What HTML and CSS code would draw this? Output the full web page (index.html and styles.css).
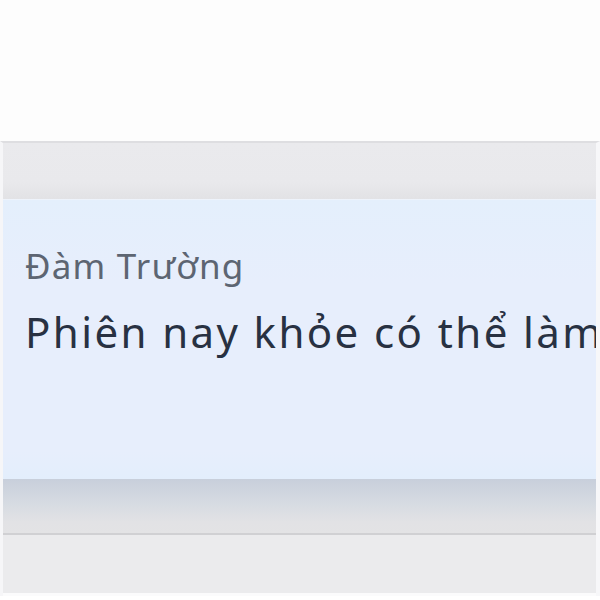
FILE: index.html
```html
<!DOCTYPE html>
<html lang="vi">
<head>
  <meta charset="UTF-8" />
  <meta name="viewport" content="width=device-width, initial-scale=1.0" />
  <title>Tin nhắn</title>
  <link rel="stylesheet" href="styles.css">
</head>
<body>

  <div class="top-space"></div>

  <div class="chat-frame">
    <div class="chat-head"></div>

    <div class="message">
      <span class="sender">Đàm Trường</span>
      <p class="text">Phiên nay khỏe có thể làm được gì không anh</p>
    </div>

    <div class="message-shadow"></div>
    <div class="chat-foot"></div>
  </div>

</body>
</html>
```

FILE: styles.css
```css
body {
  margin: 0;
  background: #fff;
  font-family: 'Noto Sans', 'Open Sans', sans-serif;
  overflow: hidden;
  height: 600px;
}

.top-space {
  height: 141px;
  background: #fdfdfd;
}

.chat-frame {
  display: flex;
  flex-direction: column;
  border-top: 2px solid #dedee1;
  border-left: 3px solid #f6f6f8;
  border-right: 4px solid #f7f7f9;
  height: 453px;
  background: #ebebed;
}

.chat-head {
  height: 56px;
  background: linear-gradient(#eaeaed, #e9e9ec 70%, #e2e2e5);
}

.message {
  height: 280px;
  background: linear-gradient(#e4effc, #e7eefc 30%, #e7eefc 90%, #e3eefc);
  border-top: 1px solid #eef3fb;
  padding: 46px 0 0 22px;
  box-sizing: border-box;
  white-space: nowrap;
  overflow: hidden;
}

.sender {
  display: block;
  font-size: 35px;
  letter-spacing: 1.2px;
  color: #5d6572;
  line-height: 40px;
}

.text {
  margin: 22px 0 0;
  font-size: 42px;
  letter-spacing: 2.4px;
  color: #283142;
  line-height: 48px;
}

.message-shadow {
  height: 54px;
  background: linear-gradient(#c8cfdb, #d6dbe2 45%, #e2e2e5 80%, #e3e3e5);
  border-bottom: 2px solid #d0d0d3;
}

.chat-foot {
  flex: 1;
  background: #ebebed;
  border-bottom: 3px solid #fbfbfc;
}
```
